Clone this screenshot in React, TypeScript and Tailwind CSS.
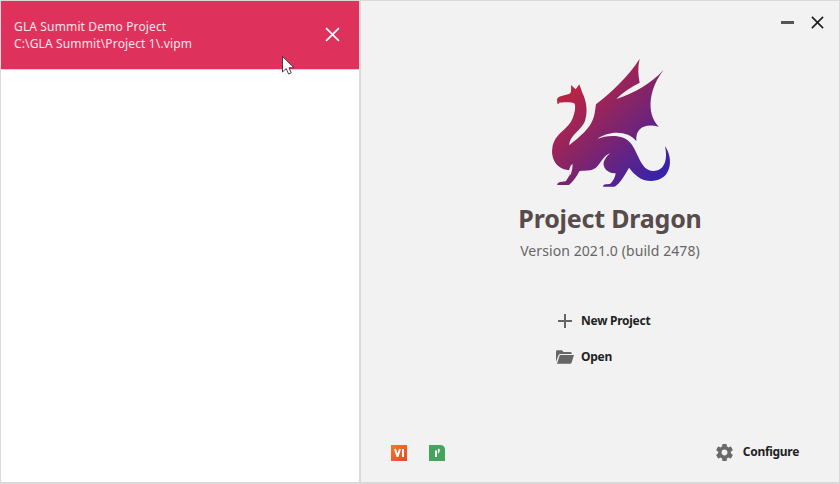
import React from 'react';

function DragonLogo() {
  return (
    <svg className="h-[145px] w-[140px]" viewBox="0 0 420 435" aria-hidden="true">
      <defs>
        <linearGradient id="dragon" gradientUnits="userSpaceOnUse" x1="75" y1="125" x2="350" y2="400">
          <stop offset="0" stopColor="#be2440" />
          <stop offset="0.5" stopColor="#7b2470" />
          <stop offset="1" stopColor="#3522ac" />
        </linearGradient>
      </defs>
      <path
        fill="url(#dragon)"
        d="M52 161 L51 147 Q54 141 62 139 L89 131 Q95 128 93 105 L107 118 L118 103 L127 128
          C140 153 144 185 135 212 C126 240 88 255 88 286 C115 262 155 238 164 190 L168 163
          C210 130 265 80 299 26 C293 50 294 75 299 98 C275 110 250 125 229 147
          C280 130 335 100 371 59 C330 112 315 185 356 230 C320 220 285 230 289 274
          C265 240 205 242 173 266 C200 255 245 252 268 275 C295 302 300 362 340 363
          C370 363 385 335 375 289 C402 325 395 392 335 393 C300 392 285 375 267 353
          C255 375 240 400 224 410 L189 410 Q189 404 198 403 L210 402 Q225 388 227 370
          C196 371 183 345 195 328 Q200 318 210 310 C182 320 180 358 150 361
          C140 363 128 361 118 364 C110 380 100 395 87 405 L51 405 Q52 398 60 396 L77 394
          Q91 377 90 361 C50 360 32 325 37 295
          C42 250 85 240 98 205 C103 190 108 175 104 161 C98 155 65 157 57 158 L57 161 Z"
      />
      {/* gap between the chest and the front leg */}
      <path d="M98 341 Q88 349 87 364 L89 378 Q97 366 98 341 Z" fill="#f2f2f2" />
    </svg>
  );
}

function CloseIcon({ className }: { className: string }) {
  return (
    <svg className={className} viewBox="0 0 14 14" fill="none" stroke="currentColor" aria-hidden="true">
      <path d="M1 1 L13 13 M13 1 L1 13" />
    </svg>
  );
}

function FolderIcon() {
  return (
    <svg className="h-[14px] w-[18px]" viewBox="0 0 18 14" fill="#666" aria-hidden="true">
      <path d="M0 12 V1.5 Q0 .3 1.2 .3 H6 L7.5 2 H14.5 Q15.7 2 15.7 3.2 V4 H4.2 Q3 4 2.6 5.1 Z" />
      <path d="M4.4 5 H18 L15.5 12.8 Q15.2 13.7 14.2 13.7 H.6 Q1.2 13.5 1.4 12.8 L3.5 5.8 Q3.7 5 4.4 5 Z" />
    </svg>
  );
}

function GearIcon() {
  return (
    <svg className="h-[17px] w-[17px]" viewBox="2 2 20 20" fill="#6a6a6a" aria-hidden="true">
      <path d="M19.43 12.98c.04-.32.07-.64.07-.98s-.03-.66-.07-.98l2.11-1.65c.19-.15.24-.42.12-.64l-2-3.46c-.12-.22-.39-.3-.61-.22l-2.49 1c-.52-.4-1.08-.73-1.69-.98l-.38-2.65A.49.49 0 0 0 14 2h-4c-.25 0-.46.18-.49.42l-.38 2.65c-.61.25-1.17.59-1.69.98l-2.49-1c-.23-.09-.49 0-.61.22l-2 3.46c-.13.22-.07.49.12.64l2.11 1.65c-.04.32-.07.65-.07.98s.03.66.07.98l-2.11 1.65c-.19.15-.24.42-.12.64l2 3.46c.12.22.39.3.61.22l2.49-1c.52.4 1.08.73 1.69.98l.38 2.65c.03.24.24.42.49.42h4c.25 0 .46-.18.49-.42l.38-2.65c.61-.25 1.17-.59 1.69-.98l2.49 1c.23.09.49 0 .61-.22l2-3.46c.12-.22.07-.49-.12-.64l-2.11-1.65zM12 15.5c-1.93 0-3.5-1.57-3.5-3.5s1.57-3.5 3.5-3.5 3.5 1.57 3.5 3.5-1.57 3.5-3.5 3.5z" />
    </svg>
  );
}

function Cursor() {
  return (
    <svg className="absolute left-[280px] top-[54px] h-5 w-[14px]" viewBox="0 0 14 20" aria-hidden="true">
      <path d="M1.5 1.5 V17 L5.2 13.6 L7.6 19 L10.2 17.9 L8 12.8 H13 Z" fill="#fff" stroke="#333" strokeWidth="0.9" />
    </svg>
  );
}

function RecentProjects() {
  return (
    <aside className="flex w-[360px] flex-col border-r-2 border-[#dadada] bg-white">
      <div className="flex h-[69px] items-center justify-between border-b border-[#eccbd3] bg-[#de325c] pl-[13px] pr-[19px] text-white">
        <div className="text-[12px] leading-[17px] text-[#fbe4ea]">
          <p className="w-fit tracking-[0.14px]">GLA Summit Demo Project</p>
          <p className="w-fit tracking-[0.14px]">C:\GLA Summit\Project 1\.vipm</p>
        </div>
        <button aria-label="Remove project" className="pb-[2px]">
          <CloseIcon className="h-[15px] w-[15px] stroke-[1.5]" />
        </button>
      </div>
    </aside>
  );
}

function App() {
  return (
    <div className="relative flex h-[484px] w-[840px] overflow-hidden border border-b-2 border-[#d9d9d9] bg-[#f2f2f2] font-['Noto_Sans','Open_Sans',sans-serif]">
      <RecentProjects />

      <main className="flex flex-1 flex-col">
        <header className="flex h-[49px] items-start justify-end gap-[17px] pr-[15px] pt-[15px] text-[#222]">
          <button aria-label="Minimize" className="mt-[5px] h-[3px] w-[13px] bg-[#555]" />
          <button aria-label="Close">
            <CloseIcon className="h-[13px] w-[13px] stroke-[1.8]" />
          </button>
        </header>

        <section className="flex flex-col items-center pl-[20px] text-[#574b4b]">
          <DragonLogo />
          <h1 className="mt-[5px] whitespace-nowrap text-[25px] font-bold leading-[36px] tracking-[-0.2px]">Project Dragon</h1>
          <p className="mt-[5px] whitespace-nowrap text-[14px] leading-[20px] tracking-[0.08px] text-[#666]">Version 2021.0 (build 2478)</p>
        </section>

        <nav className="ml-[195px] mt-[50px] flex flex-col gap-4 text-[12px] font-bold leading-5 tracking-[-0.27px] text-[#222]">
          <button className="flex items-center gap-[7px]">
            <svg className="h-[14px] w-[18px]" viewBox="0 0 18 14" stroke="#666" strokeWidth="2" aria-hidden="true">
              <path d="M2 7 H16 M9 0 V14" />
            </svg>
            New Project
          </button>
          <button className="flex items-center gap-[7px]">
            <FolderIcon />
            Open
          </button>
        </nav>

        <footer className="mb-[20px] mt-auto flex items-center justify-between pl-[30px] pr-[40px]">
          <div className="flex gap-[22px] pt-[1px]">
            <svg className="h-4 w-4" viewBox="0 0 16 16" aria-label="VI">
              <defs>
                <linearGradient id="vi" x1="0" y1="0" x2="1" y2="1">
                  <stop stopColor="#f07a2a" />
                  <stop offset="1" stopColor="#ed4528" />
                </linearGradient>
              </defs>
              <path d="M0 0 H16 V16 H0 Z" fill="url(#vi)" />
              <path d="M4 4 L6.3 11 H6.7 L9 4 M12 4 V12" fill="none" stroke="#fff" strokeWidth="2" />
            </svg>
            <svg className="h-4 w-4" viewBox="0 0 16 16" aria-hidden="true">
              <path d="M0 0 H11 Q16 0 16 5 V16 H0 Z" fill="#46a35e" />
              <path d="M7 5.5 V12" stroke="#fff" strokeWidth="2" />
              <path d="M9.2 4 V8.5 Q11.5 6.5 10.4 4 Z" fill="#fff" stroke="#fff" strokeWidth="0.4" />
            </svg>
          </div>
          <button className="flex items-center gap-[10px] text-[12px] font-bold leading-5 tracking-[-0.3px] text-[#222]">
            <GearIcon />
            Configure
          </button>
        </footer>
      </main>

      <Cursor />
    </div>
  );
}

export default App;
